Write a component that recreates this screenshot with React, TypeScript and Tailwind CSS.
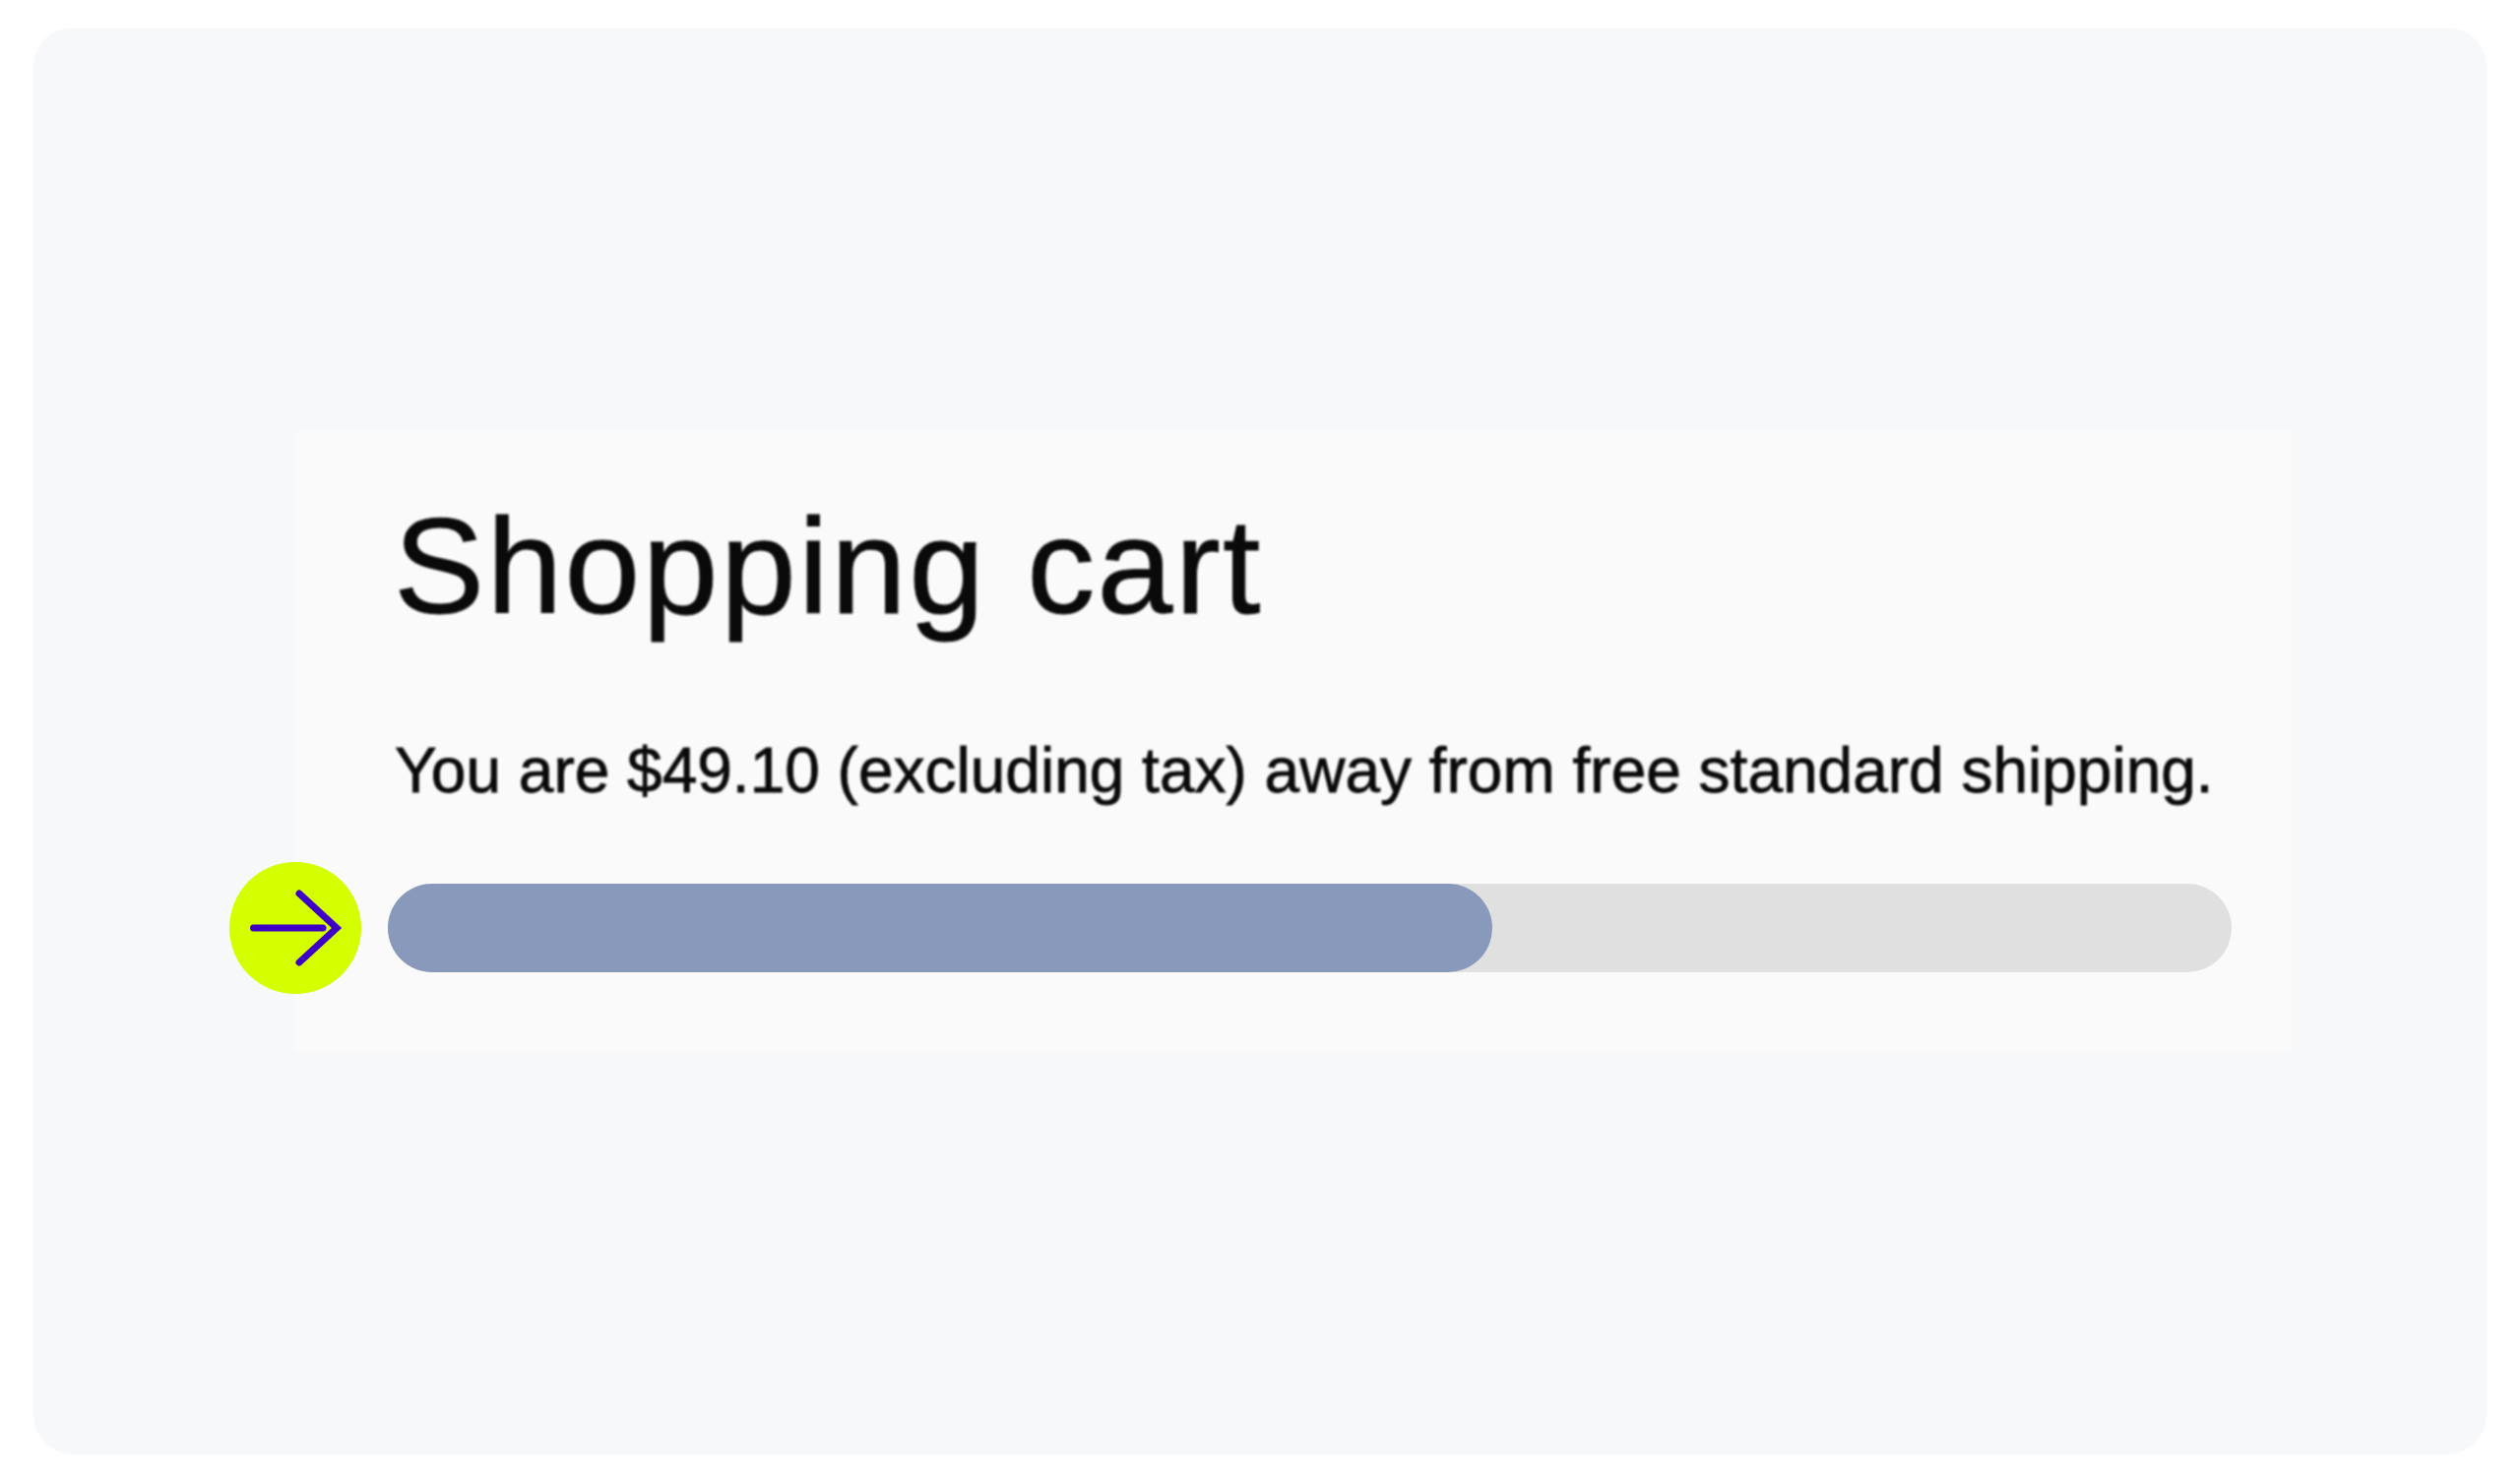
function ArrowIcon() {
  return (
    <svg viewBox="0 0 134 134" className="h-full w-full" fill="none" stroke="#3d00c4" strokeWidth="7" strokeLinecap="round" strokeLinejoin="miter">
      <path d="M24.5 67H95" />
      <path d="M71 32L109 67L71 102" />
    </svg>
  );
}

export default function App() {
  const font = { fontFamily: '"Liberation Sans", Arial, sans-serif' };
  return (
    <div className="h-[1506px] w-[2560px] overflow-hidden bg-white px-[34px] py-[28px]">
      <div className="h-[1450px] rounded-[40px] bg-[#f7f8fa] pl-[265px] pt-[410px]">
        <section className="h-[630px] w-[2029px] bg-[#fafafb] pt-[67px]" style={font}>
          <div className="blur-[0.8px]">
            <h1 className="ml-[101px] h-[140px] text-[138px] leading-[140px] font-normal tracking-[2.4px] whitespace-nowrap text-[#0a0a0a] [-webkit-text-stroke:1px_#0a0a0a]">
              Shopping cart
            </h1>
            <p className="ml-[102px] mt-[101px] h-[74px] text-[64px] leading-[74px] whitespace-nowrap text-[#0a0a0a] [-webkit-text-stroke:0.8px_#0a0a0a]">
              You are $49.10 (excluding tax) away from free standard shipping.
            </p>
          </div>
          <div className="mt-[56px] -ml-[66px] flex items-center">
            <div className="h-[134px] w-[134px] shrink-0 rounded-full bg-[#d4ff00]">
              <ArrowIcon />
            </div>
            <div className="ml-[27px] h-[90px] w-[1873px] rounded-full bg-[#e0e0e0]">
              <div className="h-full w-[1122px] rounded-full bg-[#8899bb]" />
            </div>
          </div>
        </section>
      </div>
    </div>
  );
}
